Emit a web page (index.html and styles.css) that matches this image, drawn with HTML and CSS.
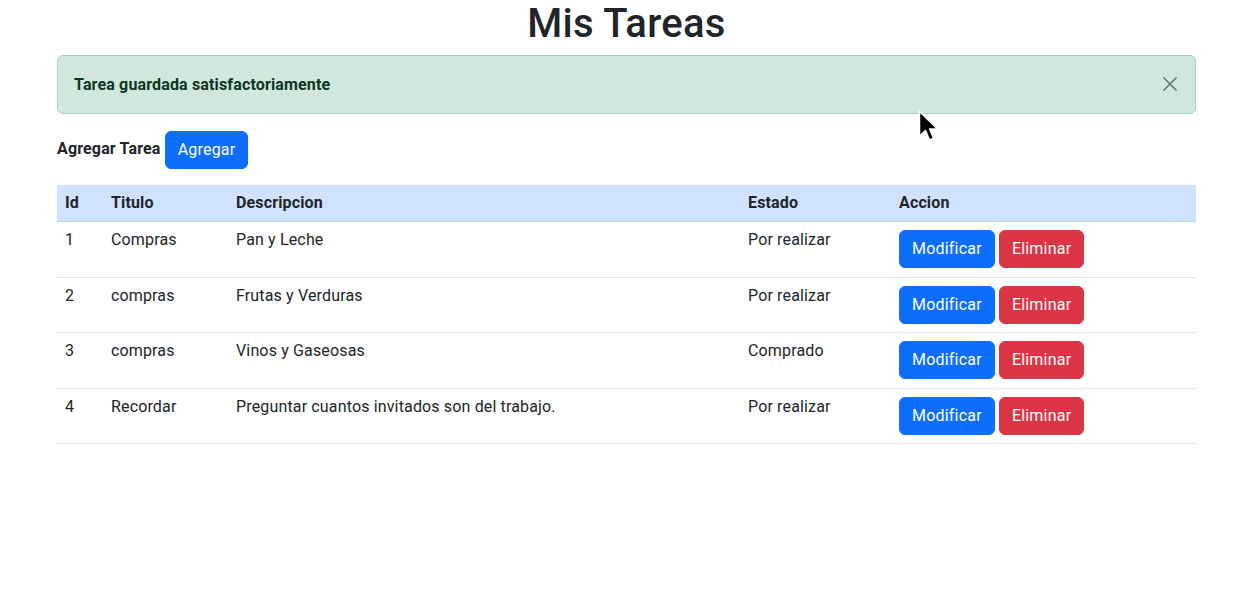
FILE: index.html
```html
<!DOCTYPE html>
<html lang="es">
<head>
<meta charset="utf-8">
<title>Mis Tareas</title>
<link rel="stylesheet" href="styles.css">
</head>
<body>
<div class="container">
  <h1 class="title">Mis Tareas</h1>
  <div class="alert">
    <span class="alert-text">Tarea guardada satisfactoriamente</span>
    <button class="btn-close" aria-label="Cerrar">
      <svg width="16" height="16" viewBox="0 0 16 16"><path d="M1.5 1.5 L14.5 14.5 M14.5 1.5 L1.5 14.5" stroke="#000" stroke-width="1.6" fill="none"/></svg>
    </button>
  </div>
  <div class="add-row">
    <label class="add-label">Agregar Tarea</label>
    <button class="btn btn-primary">Agregar</button>
  </div>
  <table class="table">
    <colgroup>
      <col class="c-id"><col class="c-tit"><col class="c-desc"><col class="c-est"><col class="c-acc">
    </colgroup>
    <thead>
      <tr><th>Id</th><th>Titulo</th><th>Descripcion</th><th>Estado</th><th>Accion</th></tr>
    </thead>
    <tbody>
      <tr><td>1</td><td>Compras</td><td>Pan y Leche</td><td>Por realizar</td><td><button class="btn btn-primary">Modificar</button> <button class="btn btn-danger">Eliminar</button></td></tr>
      <tr><td>2</td><td>compras</td><td>Frutas y Verduras</td><td>Por realizar</td><td><button class="btn btn-primary">Modificar</button> <button class="btn btn-danger">Eliminar</button></td></tr>
      <tr><td>3</td><td>compras</td><td>Vinos y Gaseosas</td><td>Comprado</td><td><button class="btn btn-primary">Modificar</button> <button class="btn btn-danger">Eliminar</button></td></tr>
      <tr><td>4</td><td>Recordar</td><td>Preguntar cuantos invitados son del trabajo.</td><td>Por realizar</td><td><button class="btn btn-primary">Modificar</button> <button class="btn btn-danger">Eliminar</button></td></tr>
    </tbody>
  </table>
</div>
<svg class="cursor" width="24" height="36" viewBox="0 0 24 36"><path d="M1.5 1.5 L1.5 26 L7.5 20.5 L11.5 30 L15.5 28.2 L11.6 19 L19.5 19 Z" fill="#000" stroke="#fff" stroke-width="1.5" stroke-linejoin="round"/></svg>
</body>
</html>
```

FILE: styles.css
```css
* { box-sizing: border-box; }
html, body { margin: 0; padding: 0; }
body {
  font-family: Roboto, "Liberation Sans", Arial, sans-serif;
  font-size: 16px;
  line-height: 1.5;
  letter-spacing: 0.15px;
  color: #212529;
  background: #fff;
  position: relative;
}
.container {
  width: 1139px;
  margin-left: 57px;
}
.title {
  margin: 0 0 7px;
  font-size: 40px;
  font-weight: 500;
  line-height: 1.2;
  letter-spacing: 0.3px;
  text-align: center;
}
.alert {
  position: relative;
  padding: 17px 48px 16px 16px;
  margin-bottom: 16px;
  background: #d1e7dd;
  border: 1px solid #a3cfbb;
  border-radius: 6px;
  color: #0a3622;
  font-weight: 700;
}
.btn-close {
  position: absolute;
  top: 0;
  right: 0;
  padding: 20px 17px;
  border: 0;
  background: transparent;
  opacity: 0.5;
  line-height: 0;
}
.add-row {
  padding-top: 1px;
  margin-bottom: 16px;
}
.add-label { font-weight: 700; }
.btn {
  display: inline-block;
  font-family: inherit;
  font-size: 16px;
  line-height: 24px;
  letter-spacing: 0.2px;
  padding: 6px 12px;
  border: 1px solid transparent;
  border-radius: 6px;
  color: #fff;
  vertical-align: middle;
}
.btn-primary { background: #0d6efd; border-color: #0d6efd; }
.btn-danger { background: #dc3545; border-color: #dc3545; }
.table {
  width: 100%;
  border-collapse: collapse;
}
.c-id { width: 46px; }
.c-tit { width: 125px; }
.c-desc { width: 512px; }
.c-est { width: 151px; }
.c-acc { width: 305px; }
.table th {
  background: #cfe2ff;
  text-align: left;
  font-weight: 700;
  padding: 6px 8px 6px;
  border-bottom: 1px solid #c2d3ee;
  vertical-align: top;
}
.table td {
  padding: 6px 8px 7px;
  vertical-align: top;
  border-bottom: 1px solid #dee2e6;
  height: 55.5px;
}
.table td:last-child { padding-top: 8px; }
.cursor {
  position: absolute;
  left: 918px;
  top: 110px;
}
```
